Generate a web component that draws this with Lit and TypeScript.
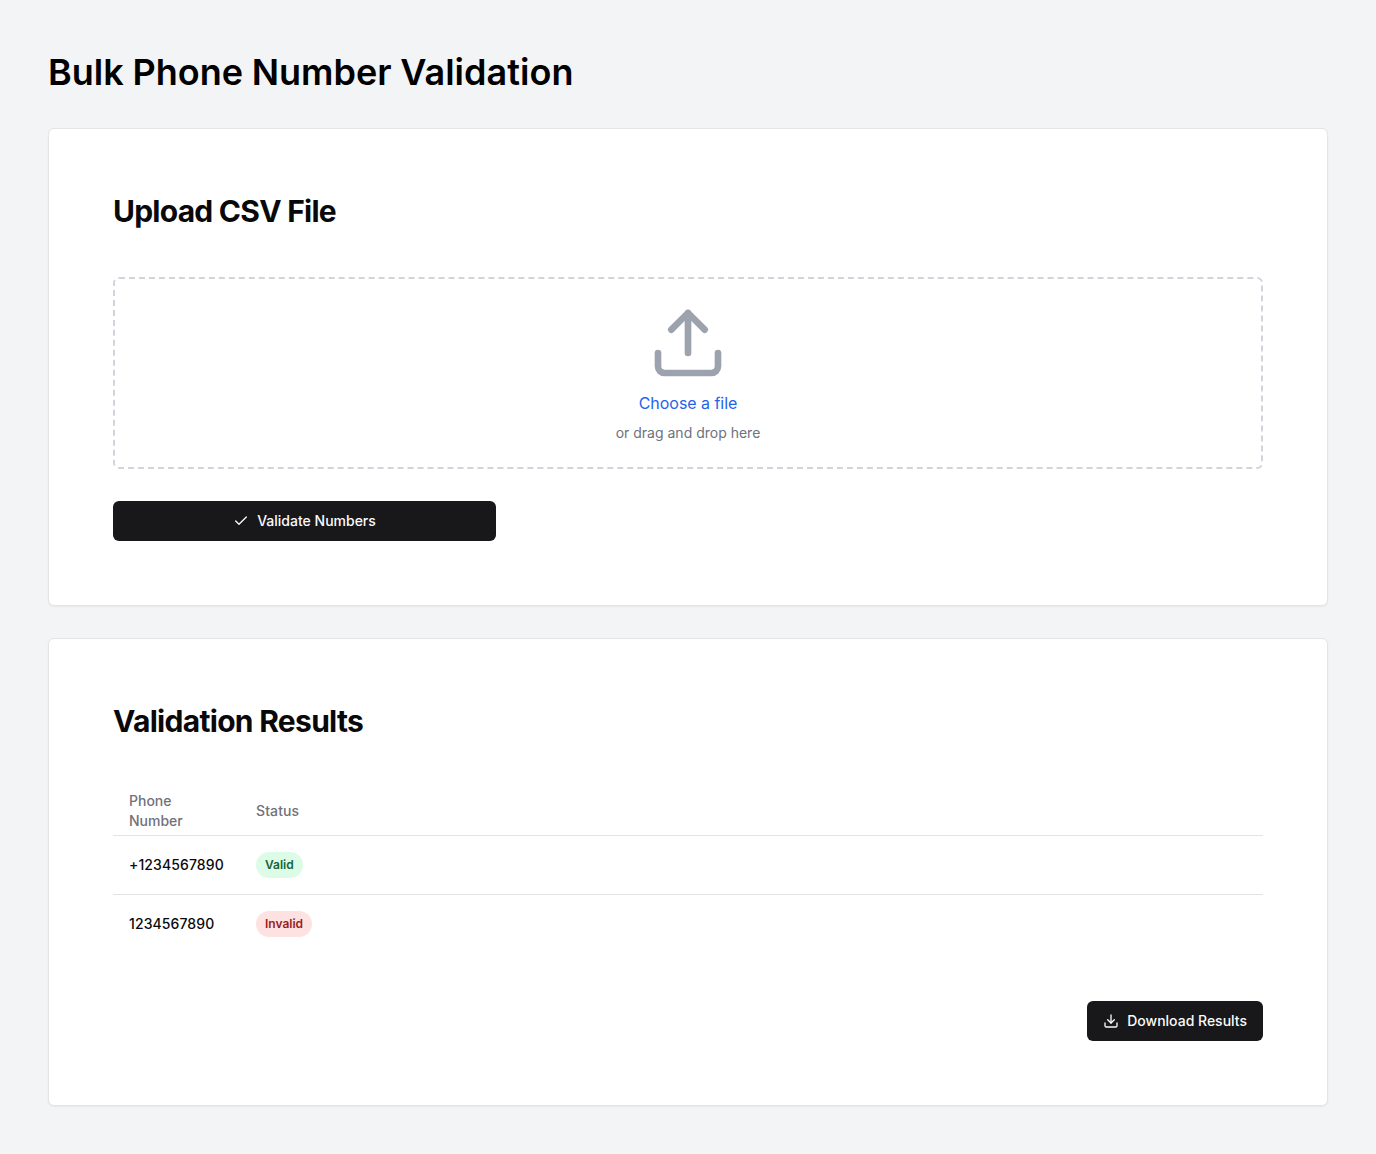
import { LitElement, html, css, svg } from "lit";
import { customElement } from "lit/decorators.js";

interface Row { phone: string; valid: boolean; }

@customElement("app-root")
export class AppRoot extends LitElement {
  private rows: Row[] = [
    { phone: "+1234567890", valid: true },
    { phone: "1234567890", valid: false },
  ];

  static styles = css`
    :host { display: block; box-sizing: border-box; min-height: 100vh; padding: 48px; background: #f3f4f6; color: #09090b; font-family: Inter, sans-serif; font-size: 16px; line-height: 24px; }
    *, *::before, *::after { box-sizing: border-box; }
    h1, h2 { margin: 0; }
    svg { display: block; fill: none; stroke: currentColor; stroke-width: 2; stroke-linecap: round; stroke-linejoin: round; }
    .title { font-size: 36px; line-height: 48px; font-weight: 600; color: #000; margin-bottom: 32px; word-spacing: -0.5px; letter-spacing: 0.03px; }
    .card { background: #fff; border: 1px solid #e4e4e7; border-radius: 6px; padding: 64px; box-shadow: 0 1px 2px rgba(0, 0, 0, 0.05); }
    .card + .card { margin-top: 32px; }
    .heading { font-size: 30px; line-height: 36px; font-weight: 700; letter-spacing: -0.75px; }
    .results { letter-spacing: -0.7px; }
    .upload { margin-top: 48px; height: 192px; border: 2px dashed #d1d5db; border-radius: 6px; display: flex; flex-direction: column; align-items: center; padding-top: 24px; }
    .upload svg { width: 80px; height: 80px; color: #9ca3af; }
    .choose { margin-top: 8px; color: #2563eb; letter-spacing: -0.04px; }
    .hint { margin-top: 8px; color: #6b7280; font-size: 14px; line-height: 20px; }
    .btn { display: flex; align-items: center; justify-content: center; gap: 8px; height: 40px; padding: 0 16px; border: 0; border-radius: 6px; background: #18181b; color: #fafafa; font: 500 14px/20px Inter, sans-serif; }
    .btn svg { width: 16px; height: 16px; }
    .validate { width: 383px; margin-top: 32px; }
    .table { width: 100%; margin-top: 48px; border-collapse: collapse; font-size: 14px; line-height: 20px; }
    th { height: 48px; padding: 0 16px; text-align: left; font-weight: 500; color: #71717a; vertical-align: middle; }
    .status { letter-spacing: 0.1px; }
    td { padding: 16px; font-weight: 500; }
    .number { letter-spacing: 0.1px; }
    tr { border-bottom: 1px solid #e4e4e7; }
    tbody tr:last-child { border-bottom: 0; }
    .phone { width: 127px; }
    .badge { display: inline-flex; vertical-align: top; border-radius: 999px; padding: 5px 9px; font-size: 12px; line-height: 16px; font-weight: 600; }
    .ok { background: #dcfce7; color: #166534; }
    .bad { background: #fee2e2; color: #991b1b; }
    .actions { display: flex; justify-content: flex-end; margin-top: 48px; }
  `;

  private upIcon = svg`<path d="M21 15v4a2 2 0 0 1-2 2H5a2 2 0 0 1-2-2v-4"/><path d="M17 8l-5-5-5 5"/><path d="M12 3v12"/>`;
  private downIcon = svg`<path d="M21 15v4a2 2 0 0 1-2 2H5a2 2 0 0 1-2-2v-4"/><path d="M7 10l5 5 5-5"/><path d="M12 15V3"/>`;

  render() {
    return html`
      <h1 class="title">Bulk Phone Number Validation</h1>
      <section class="card">
        <h2 class="heading">Upload CSV File</h2>
        <div class="upload">
          <svg viewBox="0 0 24 24">${this.upIcon}</svg>
          <span class="choose">Choose a file</span>
          <span class="hint">or drag and drop here</span>
        </div>
        <button class="btn validate"><svg viewBox="0 0 24 24"><path d="M20 6L9 17l-5-5" /></svg>Validate Numbers</button>
      </section>
      <section class="card">
        <h2 class="heading results">Validation Results</h2>
        <table class="table">
          <thead><tr><th class="phone">Phone<br />Number</th><th class="status">Status</th></tr></thead>
          <tbody>
            ${this.rows.map((r) => html`<tr><td class="number">${r.phone}</td><td><span class="badge ${r.valid ? "ok" : "bad"}">${r.valid ? "Valid" : "Invalid"}</span></td></tr>`)}
          </tbody>
        </table>
        <div class="actions"><button class="btn"><svg viewBox="0 0 24 24">${this.downIcon}</svg>Download Results</button></div>
      </section>
    `;
  }
}
